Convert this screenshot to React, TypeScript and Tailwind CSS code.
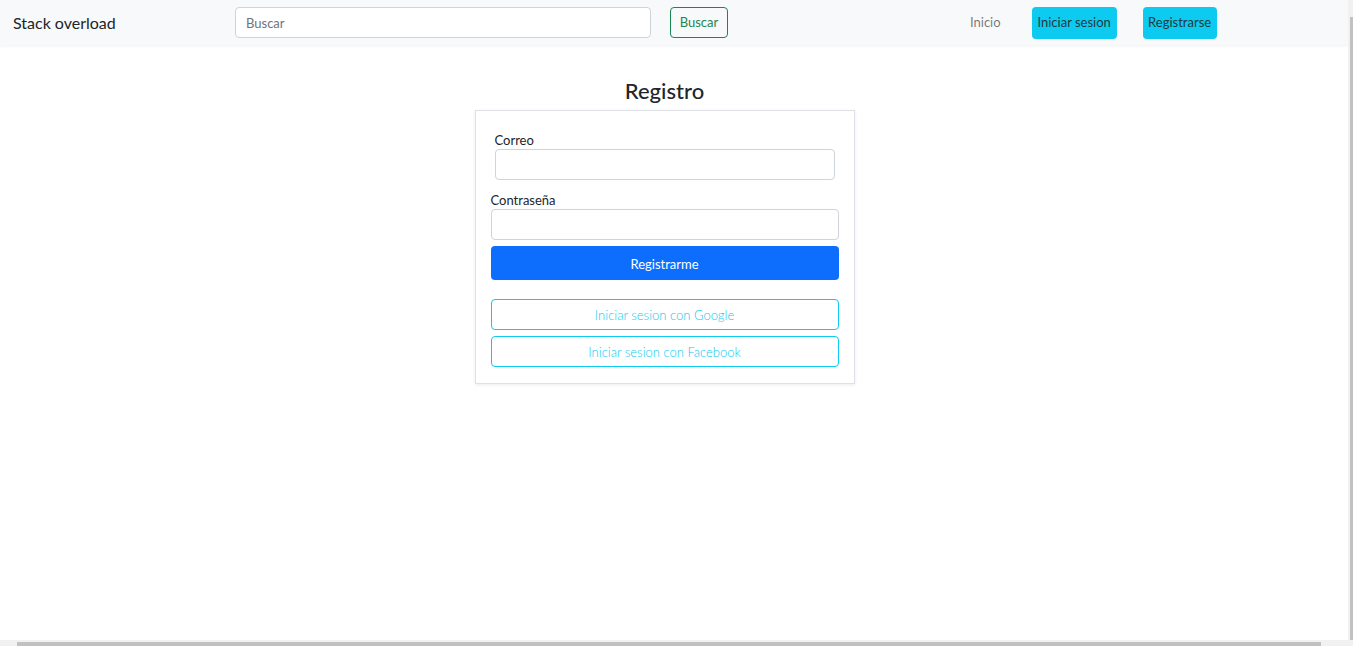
export default function App() {
  return (
    <div className="flex h-screen w-full overflow-hidden bg-white font-['Lato',sans-serif] text-[13px] text-[#212529]">
      <div className="flex min-w-0 flex-1 flex-col">
        {/* Navbar */}
        <nav className="flex h-[45px] shrink-0 items-center bg-[#f8f9fa] shadow-[0_1px_3px_rgba(0,0,0,0.06)]">
          <span className="ml-[13px] w-[222px] text-[16px]">Stack overload</span>
          <input
            type="text"
            placeholder="Buscar"
            className="h-[31px] w-[416px] rounded-[4px] border border-[#ced4da] bg-white px-[10px] text-[13px] placeholder:text-[#6c757d] outline-none"
          />
          <button className="ml-[19px] h-[31px] w-[58px] rounded-[4px] border border-[#198754] text-[13px] font-normal text-[#198754]">
            Buscar
          </button>
          <a className="ml-[242px] text-[13px] text-[rgba(0,0,0,0.55)]">Inicio</a>
          <button className="ml-[31px] h-[32px] w-[85px] rounded-[4px] bg-[#0dcaf0] text-[13px] font-normal text-[#1f3b40]">
            Iniciar sesion
          </button>
          <button className="ml-[26px] h-[32px] w-[74px] rounded-[4px] bg-[#0dcaf0] text-[13px] font-normal text-[#1f3b40]">
            Registrarse
          </button>
        </nav>

        {/* Main */}
        <main className="flex flex-1 flex-col items-center pr-[19px] pt-[32px]">
          <h3 className="text-[22px] font-medium leading-[28px]">Registro</h3>
          <div className="mt-[5px] flex w-[380px] flex-col border border-[#dee2e6] px-[15px] pb-[16px] pt-[21px] shadow-[0_1px_3px_rgba(0,0,0,0.08)]">
            <div className="flex flex-col px-[4px]">
              <label className="text-[13px] leading-[16px]">Correo</label>
              <input className="mt-[1px] h-[31px] w-full rounded-[4px] border border-[#ced4da] outline-none" />
            </div>
            <label className="mt-[12px] text-[13px] leading-[16px]">Contraseña</label>
            <input
              type="password"
              className="mt-[1px] h-[31px] w-full rounded-[4px] border border-[#ced4da] outline-none"
            />
            <button className="mt-[6px] h-[34px] w-full rounded-[4px] bg-[#0d6efd] pt-[3px] text-[13px] font-normal text-white">
              Registrarme
            </button>
            <button className="mt-[19px] h-[31px] w-full rounded-[4px] border border-[#0dcaf0] pt-[2px] text-[13px] font-light text-[#0dcaf0]">
              Iniciar sesion con Google
            </button>
            <button className="mt-[6px] h-[31px] w-full rounded-[4px] border border-[#0dcaf0] pt-[2px] text-[13px] font-light text-[#0dcaf0]">
              Iniciar sesion con Facebook
            </button>
          </div>
        </main>

        {/* horizontal scrollbar */}
        <div className="flex h-[6px] shrink-0 items-end bg-[#f1f1f1] pl-[17px] pr-[27px]">
          <div className="h-[4px] flex-1 bg-[#c1c1c1]" />
        </div>
      </div>

      {/* vertical scrollbar */}
      <div className="flex w-[5px] shrink-0 flex-col bg-[#f1f1f1] pb-[6px] pl-[2px] pt-[17px]">
        <div className="flex-1 bg-[#c1c1c1]" />
      </div>
    </div>
  );
}
